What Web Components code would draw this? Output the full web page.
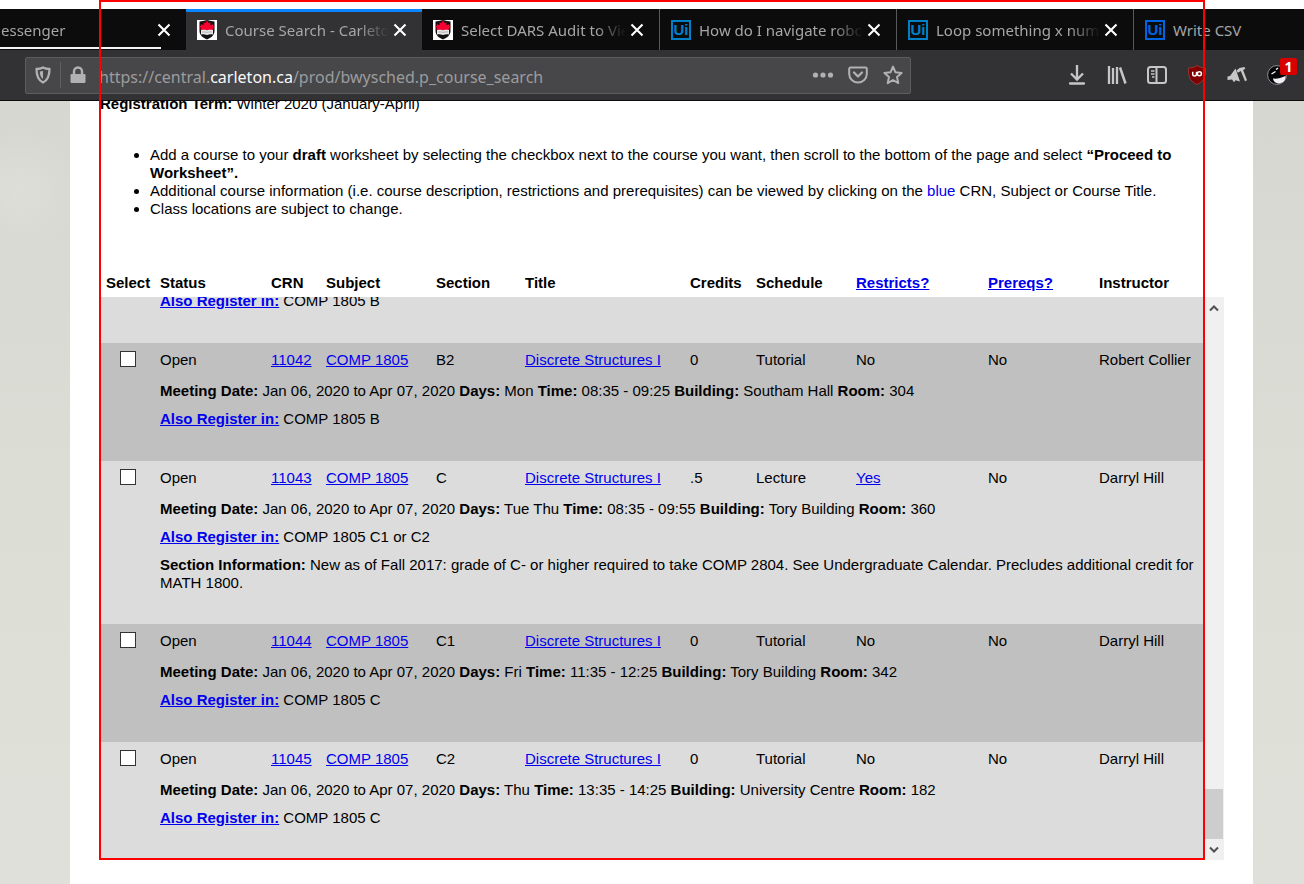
<!DOCTYPE html>
<html lang="en">
<head>
<meta charset="utf-8">
<title>Course Search - Carleton</title>
<style>
html, body { margin: 0; height: 100%; }
body { background: #fff; overflow: hidden; }
</style>
</head>
<body>
<app-window></app-window>

<template id="t-window">
<style>
:host { display: flex; flex-direction: column; position: relative; height: 100vh; padding-top: 9px; box-sizing: border-box; overflow: hidden; font-family: "Noto Sans", "Open Sans", sans-serif; }
nav { display: grid; grid-template-columns: 186fr 236fr 238fr 237fr 237fr 170fr; height: 41px; background: #0c0c0d; flex: none; }
browser-toolbar, nav { flex: none; }
course-page { flex: 1; min-height: 0; }
.frame { position: absolute; top: 0; left: 99px; right: 99px; height: 860px; box-sizing: border-box; border: 2px solid #ff0000; pointer-events: none; }
</style>
<nav aria-label="Tabs">
  <browser-tab partial closable>essenger</browser-tab>
  <browser-tab active closable><carleton-crest slot="icon"></carleton-crest>Course Search - Carleton</browser-tab>
  <browser-tab divided closable><carleton-crest slot="icon"></carleton-crest>Select DARS Audit to View</browser-tab>
  <browser-tab divided closable><ui-logo slot="icon"></ui-logo>How do I navigate robot</browser-tab>
  <browser-tab divided closable><ui-logo slot="icon"></ui-logo>Loop something x number</browser-tab>
  <browser-tab><ui-logo slot="icon" style="--logo:#0065e0"></ui-logo>Write CSV</browser-tab>
</nav>
<browser-toolbar></browser-toolbar>
<course-page></course-page>
<div class="frame"></div>
</template>

<template id="t-tab">
<style>
:host { display: flex; align-items: center; position: relative; min-width: 0; box-sizing: border-box; padding: 0 11px; color: #a6a6a7; font-size: 15px; line-height: 20px; }
:host([divided]) { border-right: 1px solid #59595b; }
:host([active]) { background: #323234; box-shadow: inset 0 3px #0a84ff; }
:host([partial]) { padding-left: 1px; }
:host([partial])::after { content: ""; position: absolute; left: 0; right: 25px; bottom: 1px; height: 2px; background: #f4f4f5; }
.label { flex: 1; min-width: 0; margin-left: 8px; overflow: hidden; white-space: nowrap; }
:host([closable]) .label { -webkit-mask-image: linear-gradient(to left, transparent, #000 30px); mask-image: linear-gradient(to left, transparent, #000 30px); }
:host([partial]) .label { margin-left: 0; }
button { display: none; flex: none; width: 22px; height: 22px; padding: 4px; border: 0; background: none; }
:host([closable]) button { display: block; }
svg { display: block; }
</style>
<slot name="icon"></slot>
<span class="label"><slot></slot></span>
<button type="button" aria-label="Close tab"><svg width="14" height="14" viewBox="0 0 14 14"><path d="M1.500 1.500 12.500 12.500M12.500 1.500 1.500 12.500" stroke="#fff" stroke-width="2.100"/></svg></button>
</template>

<template id="t-crest">
<style>:host { display: block; flex: none; width: 20px; height: 20px; } svg { display: block; }</style>
<svg width="20" height="20" viewBox="0 0 20 20"><path fill="#fff" d="M0 0h20v20H0z"/><path fill="#111" d="M2.500 1.500 6 1l4-1 4 1 3.500.5v9.500c0 4-3.500 7-7.500 8.500-4-1.500-7.500-4.500-7.500-8.500z"/><path fill="#f5002f" d="m10 .6 1.600 2.500 1.900-.6-.2 2.500 3-.8-.2 1.600 1.700.5-1.700 1.700.8 1.600-3 .4H6.100l-3-.4L3.900 8 2.200 6.300l1.700-.5-.2-1.600 3 .8-.2-2.500 1.900.6z"/><path fill="#e8e8e8" d="M4 10c2-.3 4-.1 6 .2 2-.3 4-.5 6-.2v4.500c-2-.4-4-.2-6 .4-2-.6-4-.8-6-.4z"/><path d="M5 12c2-.3 3.500 0 5 .4 1.500-.4 3-.7 5-.4" fill="none" stroke="#999" stroke-width=".7"/></svg>
</template>

<template id="t-ui">
<style>
:host { display: block; flex: none; box-sizing: border-box; width: 20px; height: 20px; border: 2px solid var(--logo, #0080c8); color: var(--logo, #0080c8); font: bold 15px/16px "Liberation Sans", sans-serif; text-align: center; }
</style>Ui
</template>

<template id="t-toolbar">
<style>
:host { display: flex; align-items: center; box-sizing: border-box; height: 51px; padding: 0 7px 0 25px; background: #323234; border-bottom: 1px solid #0c0c0d; color: #b1b1b3; }
.address { display: flex; align-items: center; flex: 1; min-width: 0; box-sizing: border-box; height: 37px; background: #474749; border: 1px solid #5c5c5e; border-radius: 2px; }
.url { flex: 1; min-width: 0; margin-left: 4px; overflow: hidden; white-space: nowrap; font-size: 16px; line-height: 22px; padding-top: 3px; color: #9c9c9e; outline: none; }
.url b { font-weight: normal; color: #f9f9fa; }
button { display: flex; align-items: center; justify-content: center; position: relative; flex: none; width: 35px; height: 35px; padding: 0; border: 0; background: none; color: inherit; }
.address .site { width: 34px; }
.rule { width: 1px; height: 26px; background: #606062; }
.tools { display: flex; margin-left: 146px; }
.tools button { width: 40px; color: #c6c6c7; }
.badge { position: absolute; right: 0; top: 0; width: 17px; height: 17px; border-radius: 2px; background: #d70000; color: #fff; font: bold 14px/17px "Noto Sans", sans-serif; }
svg { display: block; fill: none; stroke: currentColor; stroke-width: 2; }
</style>
<div class="address">
  <button class="site" type="button" aria-label="Protections"><svg width="18" height="18" viewBox="0 0 18 18"><path d="M9 1.500c2 1 4.200 1.400 6.500 1.500 0 6-1 11-6.500 13.500C3.500 14 2.500 9 2.500 3 4.800 2.900 7 2.500 9 1.500z" stroke-linejoin="round" stroke-width="2.300"/><path d="M9 5v8c-2.500-1.600-3.200-4.400-3.200-7.400z" fill="currentColor" stroke="none"/></svg></button>
  <span class="rule"></span>
  <button class="site" type="button" aria-label="Site information"><svg width="18" height="18" viewBox="0 0 18 18"><path d="M5 9V5.500a4 4 0 0 1 8 0V9" stroke-width="2.400"/><rect x="1.500" y="8" width="15" height="9" rx="1.200" fill="currentColor" stroke="none"/></svg></button>
  <div class="url" role="textbox" aria-label="Address" contenteditable="true" spellcheck="false">https://central.<b>carleton.ca</b>/prod/bwysched.p_course_search</div>
  <button type="button" aria-label="Page actions"><svg width="22" height="6" viewBox="0 0 22 6"><g fill="currentColor" stroke="none"><circle cx="3.500" cy="3" r="2.600"/><circle cx="11" cy="3" r="2.600"/><circle cx="18.500" cy="3" r="2.600"/></g></svg></button>
  <button type="button" aria-label="Save to Pocket"><svg width="20" height="18" viewBox="0 0 20 18"><path d="M2.500 1.500h15a1.300 1.300 0 0 1 1.300 1.300V8a8.800 8.500 0 0 1-17.600 0V2.800a1.300 1.300 0 0 1 1.300-1.300z"/><path d="m6 6.500 4 4 4-4" stroke-linecap="round" stroke-linejoin="round" stroke-width="2.300"/></svg></button>
  <button type="button" aria-label="Bookmark"><svg width="20" height="20" viewBox="0 0 20 20"><path d="m10 1.600 2.500 5.700 6.100.6-4.600 4.100 1.300 6.100L10 15l-5.300 3.100L6 12 1.400 7.900l6.100-.6z" stroke-linejoin="round"/></svg></button>
</div>
<div class="tools">
  <button type="button" aria-label="Downloads"><svg width="18" height="20" viewBox="0 0 18 20"><path d="M9 0v14M3 8.500l6 6 6-6" stroke-width="2.300"/><path d="M2 18.500h14" stroke-linecap="round" stroke-width="2.300"/></svg></button>
  <button type="button" aria-label="Library"><svg width="20" height="18" viewBox="0 0 20 18"><path d="M2 0v18M6 2v16M10 1v17" stroke-width="2.300"/><path d="M13 1.500l5.500 16" stroke-width="2.500"/></svg></button>
  <button type="button" aria-label="Sidebars"><svg width="20" height="18" viewBox="0 0 20 18"><rect x="1" y="1" width="18" height="16" rx="2.500"/><path d="M9.500 1v16"/><path d="M4 5h3.500M4 8h3.500M5 11h2.500" stroke-width="1.300"/></svg></button>
  <button type="button" aria-label="uBlock Origin"><svg width="18" height="20" viewBox="0 0 18 20"><path d="M9 .5c2.500 1.600 5 2.400 8.500 2.600 0 8-.5 12.500-8.500 16.400C1 15.600.5 11.100.5 3.100 4 2.900 6.500 2.100 9 .5z" fill="#800000" stroke="#b04040" stroke-width=".7"/><path d="M4.700 6.700v2.600c0 2.200 3.800 2.200 3.800 0V6.700" stroke="#fff" stroke-width="1.500"/><circle cx="11.400" cy="8.700" r="2" stroke="#fff" stroke-width="1.500"/></svg></button>
  <button type="button" aria-label="Extension"><svg width="20" height="16" viewBox="0 0 20 16"><g fill="#c8c8c8" stroke="none"><path d="M8.500 1.500 13 14.500l-4.500-1.300-1.500 2-2-2.700L.5 13V9.500L3 9z"/><path d="M9.500 3.500 12.500 1l5-1 .8 1.800-2.200 1.200L20 13.300l-2 1L13.800 4l-3 1.800z"/></g></svg></button>
  <button type="button" aria-label="Monkey extension, 1 notification"><svg width="20" height="20" viewBox="0 0 20 20"><circle cx="10" cy="10" r="9.400" fill="#050505" stroke="#aaa" stroke-width=".8"/><path d="M6 13.500c4 .5 8-.5 12.500-2.500.5 4-2 6.500-6 7.500-3.500 0-6-1.500-6.500-5z" fill="#f4eef8" stroke="none"/><path d="m4.500 9 4-2.500M9 4.500l2-1.500" stroke="#fff" stroke-width="1.300"/></svg><span class="badge">1</span></button>
</div>
</template>

<template id="t-page">
<style>
:host { display: block; overflow: hidden; box-sizing: border-box; padding: 0 51px 0 70px; background: radial-gradient(circle at 20px 90px, #dcded7, transparent 60px), linear-gradient(#d6d7d0, #d9dad3 200px, #dddfd7 480px, #dfe0d9); color: #000; font: 15px/18px "Liberation Sans", Arial, sans-serif; }
article { background: #fff; min-height: 100%; margin-top: -6px; padding: 0 29px 31px 31px; box-sizing: border-box; }
p { margin: 0 0 33px -1px; }
ul { margin: 0 0 56px; padding-left: 49px; }
.blue { color: #0000ee; }
</style>
<article>
<p><b>Registration Term:</b> Winter 2020 (January-April)</p>
<ul>
<li>Add a course to your <b>draft</b> worksheet by selecting the checkbox next to the course you want, then scroll to the bottom of the page and select <b>“Proceed to Worksheet”.</b></li>
<li>Additional course information (i.e. course description, restrictions and prerequisites) can be viewed by clicking on the <span class="blue">blue</span> CRN, Subject or Course Title.</li>
<li>Class locations are subject to change.</li>
</ul>
<course-table></course-table>
</article>
</template>

<template id="t-table">
<style>
:host { display: block; }
table { width: 100%; table-layout: fixed; border-collapse: collapse; }
.head { padding-right: 21px; }
.head table { margin-bottom: 5px; }
th, td { padding: 0 0 0 2px; text-align: left; vertical-align: top; white-space: nowrap; }
th:first-child { padding-left: 5px; }
a { color: #0000ee; }
.body { display: grid; grid-template-columns: 1fr 21px; height: 563px; }
.rows { display: flex; align-items: flex-end; overflow: hidden; }
tbody { background: #dcdcdc; }
tbody.dark { background: #c0c0c0; }
.main td { padding-top: 8px; padding-bottom: 13px; }
.detail td { white-space: normal; padding-bottom: 10px; }
.detail:last-child td { padding-bottom: 33px; }
.detail.info:last-child td { padding-bottom: 32px; }
input { appearance: none; display: block; box-sizing: border-box; width: 16px; height: 16px; margin: 0 0 0 17px; border: 1px solid #333; background: #fff; }
</style>
<div class="head"><table><colgroup></colgroup><thead><tr><th>Select</th><th>Status</th><th>CRN</th><th>Subject</th><th>Section</th><th>Title</th><th>Credits</th><th>Schedule</th><th><a href="#restricts">Restricts?</a></th><th><a href="#prereqs">Prereqs?</a></th><th>Instructor</th></tr></thead></table></div>
<div class="body">
  <div class="rows"><table class="courses"><colgroup></colgroup></table></div>
  <scroll-bar></scroll-bar>
</div>
</template>

<template id="t-scroll">
<style>
:host { display: flex; flex-direction: column; background: #f0f0f0; }
button { flex: none; height: 21px; padding: 0; border: 0; background: none; display: grid; place-items: center; }
.track { flex: 1; display: flex; flex-direction: column; justify-content: flex-end; }
.thumb { height: 50px; margin-right: 1px; background: #cdcdcd; }
svg { fill: none; stroke: #505050; stroke-width: 2; }
</style>
<button type="button" aria-label="Scroll up"><svg width="10" height="8" viewBox="0 0 10 8"><path d="m1 6.500 4-4 4 4"/></svg></button>
<div class="track"><div class="thumb"></div></div>
<button type="button" aria-label="Scroll down"><svg width="10" height="8" viewBox="0 0 10 8"><path d="m1 1.500 4 4 4-4"/></svg></button>
</template>

<script>
class TemplateElement extends HTMLElement {
  constructor() {
    super();
    this.attachShadow({ mode: "open" }).append(document.getElementById(this.constructor.template).content.cloneNode(true));
  }
}
const element = (tag, template) => customElements.define(tag, class extends TemplateElement { static template = template; });

const COLUMNS = [57, 111, 55, 110, 89, 165, 66, 100, 132, 111, 106];
const COURSES = [
  { partial: true, also: "COMP 1805 B" },
  { crn: "11042", section: "B2", credits: "0", type: "Tutorial", restricts: "No", who: "Robert Collier", days: "Mon", time: "08:35 - 09:25", building: "Southam Hall", room: "304", also: "COMP 1805 B" },
  { crn: "11043", section: "C", credits: ".5", type: "Lecture", restricts: "Yes", who: "Darryl Hill", days: "Tue Thu", time: "08:35 - 09:55", building: "Tory Building", room: "360", also: "COMP 1805 C1 or C2", info: "New as of Fall 2017: grade of C- or higher required to take COMP 2804. See Undergraduate Calendar. Precludes additional credit for MATH 1800." },
  { crn: "11044", section: "C1", credits: "0", type: "Tutorial", restricts: "No", who: "Darryl Hill", days: "Fri", time: "11:35 - 12:25", building: "Tory Building", room: "342", also: "COMP 1805 C" },
  { crn: "11045", section: "C2", credits: "0", type: "Tutorial", restricts: "No", who: "Darryl Hill", days: "Thu", time: "13:35 - 14:25", building: "University Centre", room: "182", also: "COMP 1805 C" }
];
const link = text => `<a href="#${text.replace(/ /g, "-")}">${text}</a>`;
const detail = (html, name = "") => `<tr class="detail ${name}"><td></td><td colspan="10">${html}</td></tr>`;

class CourseTable extends TemplateElement {
  static template = "t-table";
  connectedCallback() {
    for (const group of this.shadowRoot.querySelectorAll("colgroup"))
      group.innerHTML = COLUMNS.map(w => `<col style="width:${w}px">`).join("");
    this.shadowRoot.querySelector(".courses").insertAdjacentHTML("beforeend", COURSES.map((c, i) => {
      let rows = "";
      if (!c.partial) {
        rows += `<tr class="main"><td><input type="checkbox" aria-label="Select ${c.crn}"></td><td>Open</td><td>${link(c.crn)}</td><td>${link("COMP 1805")}</td><td>${c.section}</td><td>${link("Discrete Structures I")}</td><td>${c.credits}</td><td>${c.type}</td><td>${c.restricts === "Yes" ? link("Yes") : c.restricts}</td><td>No</td><td>${c.who}</td></tr>`;
        rows += detail(`<b>Meeting Date:</b> Jan 06, 2020 to Apr 07, 2020 <b>Days:</b> ${c.days} <b>Time:</b> ${c.time} <b>Building:</b> ${c.building} <b>Room:</b> ${c.room}`);
      }
      rows += detail(`<b>${link("Also Register in:")}</b> ${c.also}`);
      if (c.info) rows += detail(`<b>Section Information:</b> ${c.info}`, "info");
      return `<tbody class="${i % 2 ? "dark" : ""}">${rows}</tbody>`;
    }).join(""));
  }
}

element("carleton-crest", "t-crest");
element("ui-logo", "t-ui");
element("browser-tab", "t-tab");
element("browser-toolbar", "t-toolbar");
element("scroll-bar", "t-scroll");
customElements.define("course-table", CourseTable);
element("course-page", "t-page");
element("app-window", "t-window");
</script>
</body>
</html>
